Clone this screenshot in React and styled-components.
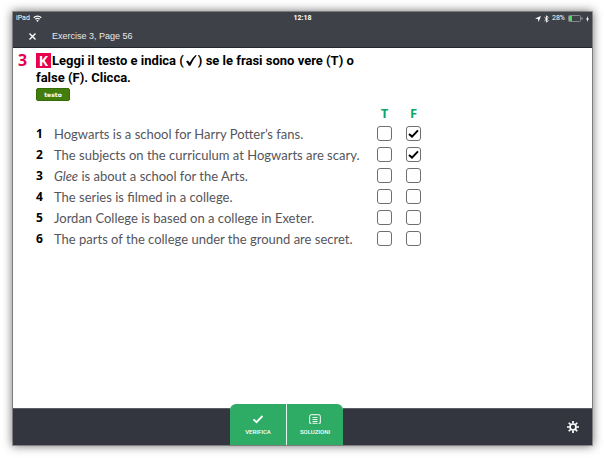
import React, { useState } from 'react';
import styled, { createGlobalStyle } from 'styled-components';

const GlobalStyle = createGlobalStyle`
  * {
    box-sizing: border-box;
  }

  body {
    margin: 0;
    background: #ffffff;
    font-family: "Liberation Sans", sans-serif;
  }

  button {
    padding: 0;
    border: 0;
    background: none;
    color: inherit;
    font: inherit;
    cursor: pointer;
  }
`;

const Page = styled.div`
  display: flex;
  min-height: 100vh;
  padding: 12px 12px 13px 13px;
`;

const Tablet = styled.div`
  display: flex;
  flex: 1;
  flex-direction: column;
  background: #ffffff;
  box-shadow: 0 0 0 1px rgba(0, 0, 0, 0.3), 0 0 9px 1px rgba(0, 0, 0, 0.55);
`;

const Header = styled.header`
  height: 36px;
  border-bottom: 1px solid #25272f;
  background: #3e4148;
  color: #ffffff;
`;

const StatusBar = styled.div`
  display: grid;
  grid-template-columns: 1fr auto 1fr;
  align-items: center;
  height: 13px;
  padding: 0 3px;
  font-family: Roboto, sans-serif;
  font-size: 7px;
  line-height: 13px;
`;

const StatusGroup = styled.div`
  display: flex;
  align-items: center;
  justify-content: ${({ $end }) => ($end ? 'flex-end' : 'flex-start')};
  gap: 3px;
`;

const Clock = styled.time`
  font-weight: 700;
`;

const TitleBar = styled.div`
  display: flex;
  align-items: center;
  gap: 15px;
  height: 22px;
  padding-left: 15px;
`;

const CloseButton = styled.button`
  display: flex;
  width: 9px;
  height: 9px;
`;

const Title = styled.h1`
  margin: 0;
  color: #e8e8ea;
  font-size: 9px;
  font-weight: 400;
  line-height: 22px;
`;

const Content = styled.main`
  display: flex;
  flex: 1;
  gap: 8px;
  padding: 4px 5px;
`;

const ExerciseNumber = styled.div`
  width: 10px;
  color: #e6004f;
  font-family: "Open Sans", sans-serif;
  font-size: 16px;
  font-weight: 700;
  line-height: 16px;
`;

const Exercise = styled.section`
  flex: 1;
`;

const Instructions = styled.h2`
  margin: 0;
  color: #000000;
  font-family: Roboto, sans-serif;
  font-size: 13px;
  font-weight: 700;
  line-height: 17px;
`;

const Key = styled.span`
  float: left;
  width: 15px;
  height: 15px;
  margin: 1px 1px 0 0;
  background: #e6004f;
  color: #ffffff;
  font-family: "Open Sans", sans-serif;
  font-size: 14px;
  line-height: 15px;
  text-align: center;
`;

const InlineTick = styled.svg`
  width: 14px;
  height: 11px;
  vertical-align: -1px;
`;

const TextButton = styled.button`
  display: block;
  width: 34px;
  height: 13px;
  margin-top: 2px;
  && {
    border: 1px solid #356b08;
    border-radius: 2px;
    background: #437d0b;
    color: #ffffff;
    font-family: "DejaVu Sans", sans-serif;
    font-size: 6px;
    font-weight: 700;
    line-height: 11px;
  }
`;

const Answers = styled.table`
  margin-top: 2px;
  border-spacing: 0;
  color: #55555b;
  font-family: "Open Sans", sans-serif;
  font-size: 12px;
`;

const Row = styled.tr`
  height: 21px;
`;

const Number = styled.td`
  width: 18px;
  padding: 0;
  color: #000000;
  font-weight: 700;
`;

const Sentence = styled.th`
  width: 316px;
  padding: 0;
  font-family: Lato, sans-serif;
  font-size: 13px;
  font-weight: 400;
  line-height: 20px;
  text-align: left;
  white-space: nowrap;
`;

const ColumnTitle = styled.th`
  width: 29px;
  padding: 0;
  color: #0aa86b;
  font-size: 13px;
  font-weight: 700;
  line-height: 20px;
  text-align: center;
`;

const AnswerCell = styled.td`
  padding: 0;
  text-align: center;
`;

const Box = styled.label`
  display: grid;
  width: 15px;
  height: 15px;
  margin: 0 auto;

  > * {
    grid-area: 1 / 1;
  }
`;

const Checkbox = styled.input`
  width: 15px;
  height: 15px;
  margin: 0;
  border: 1px solid #6e6e70;
  border-radius: 3px;
  background: #ffffff;
  appearance: none;
  cursor: pointer;
`;

const BoxTick = styled.svg`
  place-self: center;
  width: 11px;
  height: 9px;
  pointer-events: none;
`;

const Footer = styled.footer`
  display: grid;
  grid-template-columns: 1fr auto 1fr 32px;
  align-items: center;
  height: 37px;
  border-top: 1px solid #5c5e65;
  background: #33363f;
  color: #ffffff;
`;

const Actions = styled.div`
  display: flex;
  grid-column: 2;
  gap: 1px;
  height: 41px;
  margin-top: -5px;
  border-radius: 6px 6px 0 0;
  background: #e4f5eb;
  overflow: hidden;
`;

const ActionButton = styled.button`
  display: flex;
  flex-direction: column;
  align-items: center;
  gap: 4px;
  width: 56px;
  && {
    padding-top: 10px;
    background: #2eac66;
    font-family: Roboto, sans-serif;
    font-size: 6px;
    font-weight: 500;
    line-height: 8px;
  }
`;

const ActionIcon = styled.svg`
  width: 12px;
  height: 10px;
`;

const SettingsButton = styled.button`
  display: flex;
  grid-column: 3 / 5;
  justify-self: end;
  margin-right: 13px;
`;

const questions = [
  { id: 1, text: 'Hogwarts is a school for Harry Potter’s fans.', answer: 'F' },
  { id: 2, text: 'The subjects on the curriculum at Hogwarts are scary.', answer: 'F' },
  { id: 3, text: <><em>Glee</em> is about a school for the Arts.</> },
  { id: 4, text: 'The series is filmed in a college.' },
  { id: 5, text: 'Jordan College is based on a college in Exeter.' },
  { id: 6, text: 'The parts of the college under the ground are secret.' },
];

const Status = () => (
  <StatusBar>
    <StatusGroup>
      <span>iPad</span>
      <svg width="9" height="7" viewBox="0 0 16 13" fill="none" stroke="currentColor" strokeWidth="2.4">
        <path d="M1 5a10 10 0 0 1 14 0M4 8a6 6 0 0 1 8 0" />
        <path d="M8 13L5.6 10.4a3.4 3.4 0 0 1 4.8 0z" fill="currentColor" stroke="none" />
      </svg>
    </StatusGroup>
    <Clock>12:18</Clock>
    <StatusGroup $end>
      <svg width="6" height="6" viewBox="0 0 12 12" fill="currentColor">
        <path d="M12 0L7 12L6 6L0 5z" />
      </svg>
      <svg width="5" height="8" viewBox="0 0 10 16" fill="none" stroke="currentColor" strokeWidth="1.8">
        <path d="M1 4.5L8.5 11L5 14.5V1.5L8.5 5L1 11.5" />
      </svg>
      <span>28%</span>
      <svg width="15" height="7" viewBox="0 0 15 7">
        <rect x="0.5" y="0.5" width="12" height="6" rx="1" fill="none" stroke="#85878c" />
        <rect x="1" y="1" width="3" height="5" fill="#4cd964" />
        <path d="M14 2.5v2" stroke="#b5b6ba" />
      </svg>
      <svg width="3" height="6" viewBox="0 0 6 12" fill="currentColor">
        <path d="M4 0L0 7h2.5L2 12L6 5H3.5z" />
      </svg>
    </StatusGroup>
  </StatusBar>
);

const Question = ({ question, answer, onAnswer }) => (
  <Row>
    <Number>{question.id}</Number>
    <Sentence scope="row">{question.text}</Sentence>
    {['T', 'F'].map((value) => (
      <AnswerCell key={value}>
        <Box>
          <Checkbox
            type="checkbox"
            aria-label={`${question.id} ${value}`}
            checked={answer === value}
            onChange={() => onAnswer(question.id, answer === value ? null : value)}
          />
          {answer === value && (
            <BoxTick viewBox="0 0 11 9" fill="none" stroke="#000000" strokeWidth="2">
              <path d="M1 5l3 2.6L10 1.4" />
            </BoxTick>
          )}
        </Box>
      </AnswerCell>
    ))}
  </Row>
);

const App = () => {
  const [answers, setAnswers] = useState(
    Object.fromEntries(questions.map(({ id, answer }) => [id, answer])),
  );

  const handleAnswer = (id, value) => setAnswers({ ...answers, [id]: value });

  return (
    <Page>
      <GlobalStyle />
      <Tablet>
        <Header>
          <Status />
          <TitleBar>
            <CloseButton type="button" aria-label="Chiudi">
              <svg width="9" height="9" viewBox="0 0 9 9" stroke="currentColor" strokeWidth="1.4">
                <path d="M1.5 1.5l6 6M7.5 1.5l-6 6" />
              </svg>
            </CloseButton>
            <Title>Exercise 3, Page 56</Title>
          </TitleBar>
        </Header>
        <Content>
          <ExerciseNumber>3</ExerciseNumber>
          <Exercise>
            <Instructions>
              <Key>K</Key>
              Leggi il testo e indica (
              <InlineTick viewBox="0 0 12 11">
                <path d="M1 6.6L3 5.4L4.6 7.8Q7 3 10.6 0L11.6 .4Q7.6 5 5.4 10.8H3.8Q2.8 8.4 1 6.6z" />
              </InlineTick>
              ) se le frasi sono vere (T) o
              <br />
              false (F). Clicca.
            </Instructions>
            <TextButton type="button">testo</TextButton>
            <Answers>
              <thead>
                <tr>
                  <td colSpan={2} />
                  <ColumnTitle scope="col">T</ColumnTitle>
                  <ColumnTitle scope="col">F</ColumnTitle>
                </tr>
              </thead>
              <tbody>
                {questions.map((question) => (
                  <Question
                    key={question.id}
                    question={question}
                    answer={answers[question.id]}
                    onAnswer={handleAnswer}
                  />
                ))}
              </tbody>
            </Answers>
          </Exercise>
        </Content>
        <Footer>
          <Actions>
            <ActionButton type="button">
              <ActionIcon viewBox="0 0 12 10" fill="none" stroke="currentColor" strokeWidth="1.8">
                <path d="M1.5 5.4l3 2.8L10.5 2" />
              </ActionIcon>
              VERIFICA
            </ActionButton>
            <ActionButton type="button">
              <ActionIcon viewBox="0 0 12 10" fill="none" stroke="currentColor">
                <path d="M2.3 9.3H.7V2.2Q.7.7 2.2.7h7.6q1.5 0 1.5 1.5v7.1H9.7" />
                <path d="M3.5 3.5h5M3.5 5.5h5M3.5 7.5h5M3.5 9.3h5" strokeWidth=".9" />
              </ActionIcon>
              SOLUZIONI
            </ActionButton>
          </Actions>
          <SettingsButton type="button" aria-label="Impostazioni">
            <svg width="12" height="12" viewBox="0 0 24 24" fill="none" stroke="currentColor">
              <circle cx="12" cy="12" r="6" strokeWidth="3.4" />
              <path
                d="M12 0v5M12 19v5M0 12h5M19 12h5M3.5 3.5l3.5 3.5M17 17l3.5 3.5M3.5 20.5l3.5-3.5M17 7l3.5-3.5"
                strokeWidth="3.4"
              />
            </svg>
          </SettingsButton>
        </Footer>
      </Tablet>
    </Page>
  );
};

export default App;
